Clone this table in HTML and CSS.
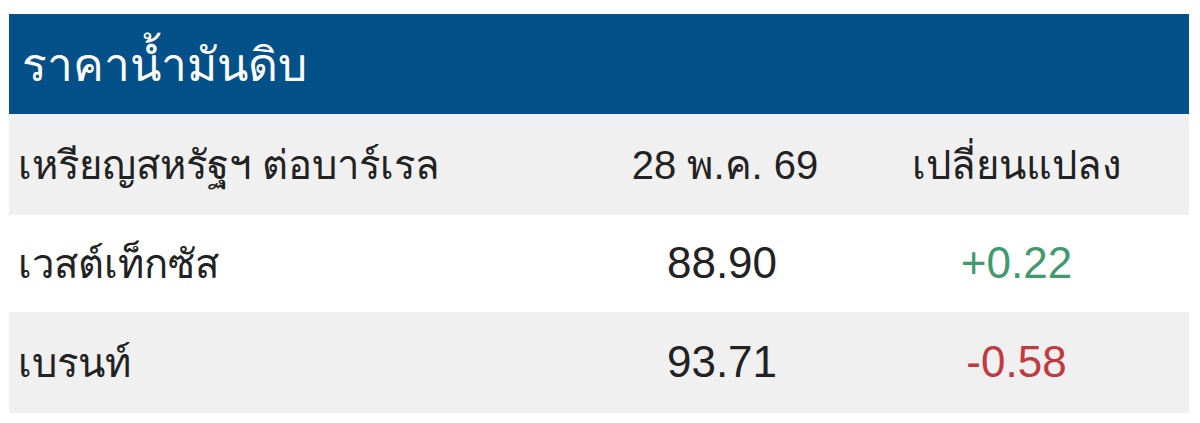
FILE: index.html
```html
<!DOCTYPE html>
<html lang="th">
<head>
<meta charset="utf-8">
<link rel="stylesheet" href="styles.css">
</head>
<body>
<div class="widget">
  <div class="title">ราคาน้ำมันดิบ</div>
  <div class="row head">
    <div class="c1">เหรียญสหรัฐฯ ต่อบาร์เรล</div>
    <div class="c2">28 พ.ค. 69</div>
    <div class="c3">เปลี่ยนแปลง</div>
  </div>
  <div class="row odd">
    <div class="c1">เวสต์เท็กซัส</div>
    <div class="c2 num">88.90</div>
    <div class="c3 num up">+0.22</div>
  </div>
  <div class="row even">
    <div class="c1">เบรนท์</div>
    <div class="c2 num">93.71</div>
    <div class="c3 num down">-0.58</div>
  </div>
</div>
</body>
</html>
```

FILE: styles.css
```css
html, body {
  margin: 0;
  padding: 0;
  background: #ffffff;
}
body {
  padding: 14px 11px 10px 9px;
  font-family: "Liberation Sans", Arial, sans-serif;
  color: #222222;
}
.widget {
  width: 1180px;
}
.title {
  background: #04518a;
  color: #ffffff;
  height: 100px;
  display: flex;
  align-items: center;
  padding-left: 13px;
  padding-top: 2px;
  box-sizing: border-box;
  font-size: 46px;
  line-height: 1;
}
.row {
  display: grid;
  grid-template-columns: 591px 244px 345px;
  align-items: center;
  font-size: 40px;
  line-height: 1.2;
}
.head {
  height: 101px;
  background: #f0f0f0;
}
.odd {
  height: 97px;
  background: #ffffff;
}
.even {
  height: 101px;
  background: #f0f0f0;
}
.c1 {
  padding-left: 9px;
}
.c2, .c3 {
  text-align: center;
}
.head .c2 {
  padding-left: 6px;
}
.num {
  font-size: 44px;
}
.up {
  color: #3f9b6e;
}
.down {
  color: #c23a3f;
}
```
